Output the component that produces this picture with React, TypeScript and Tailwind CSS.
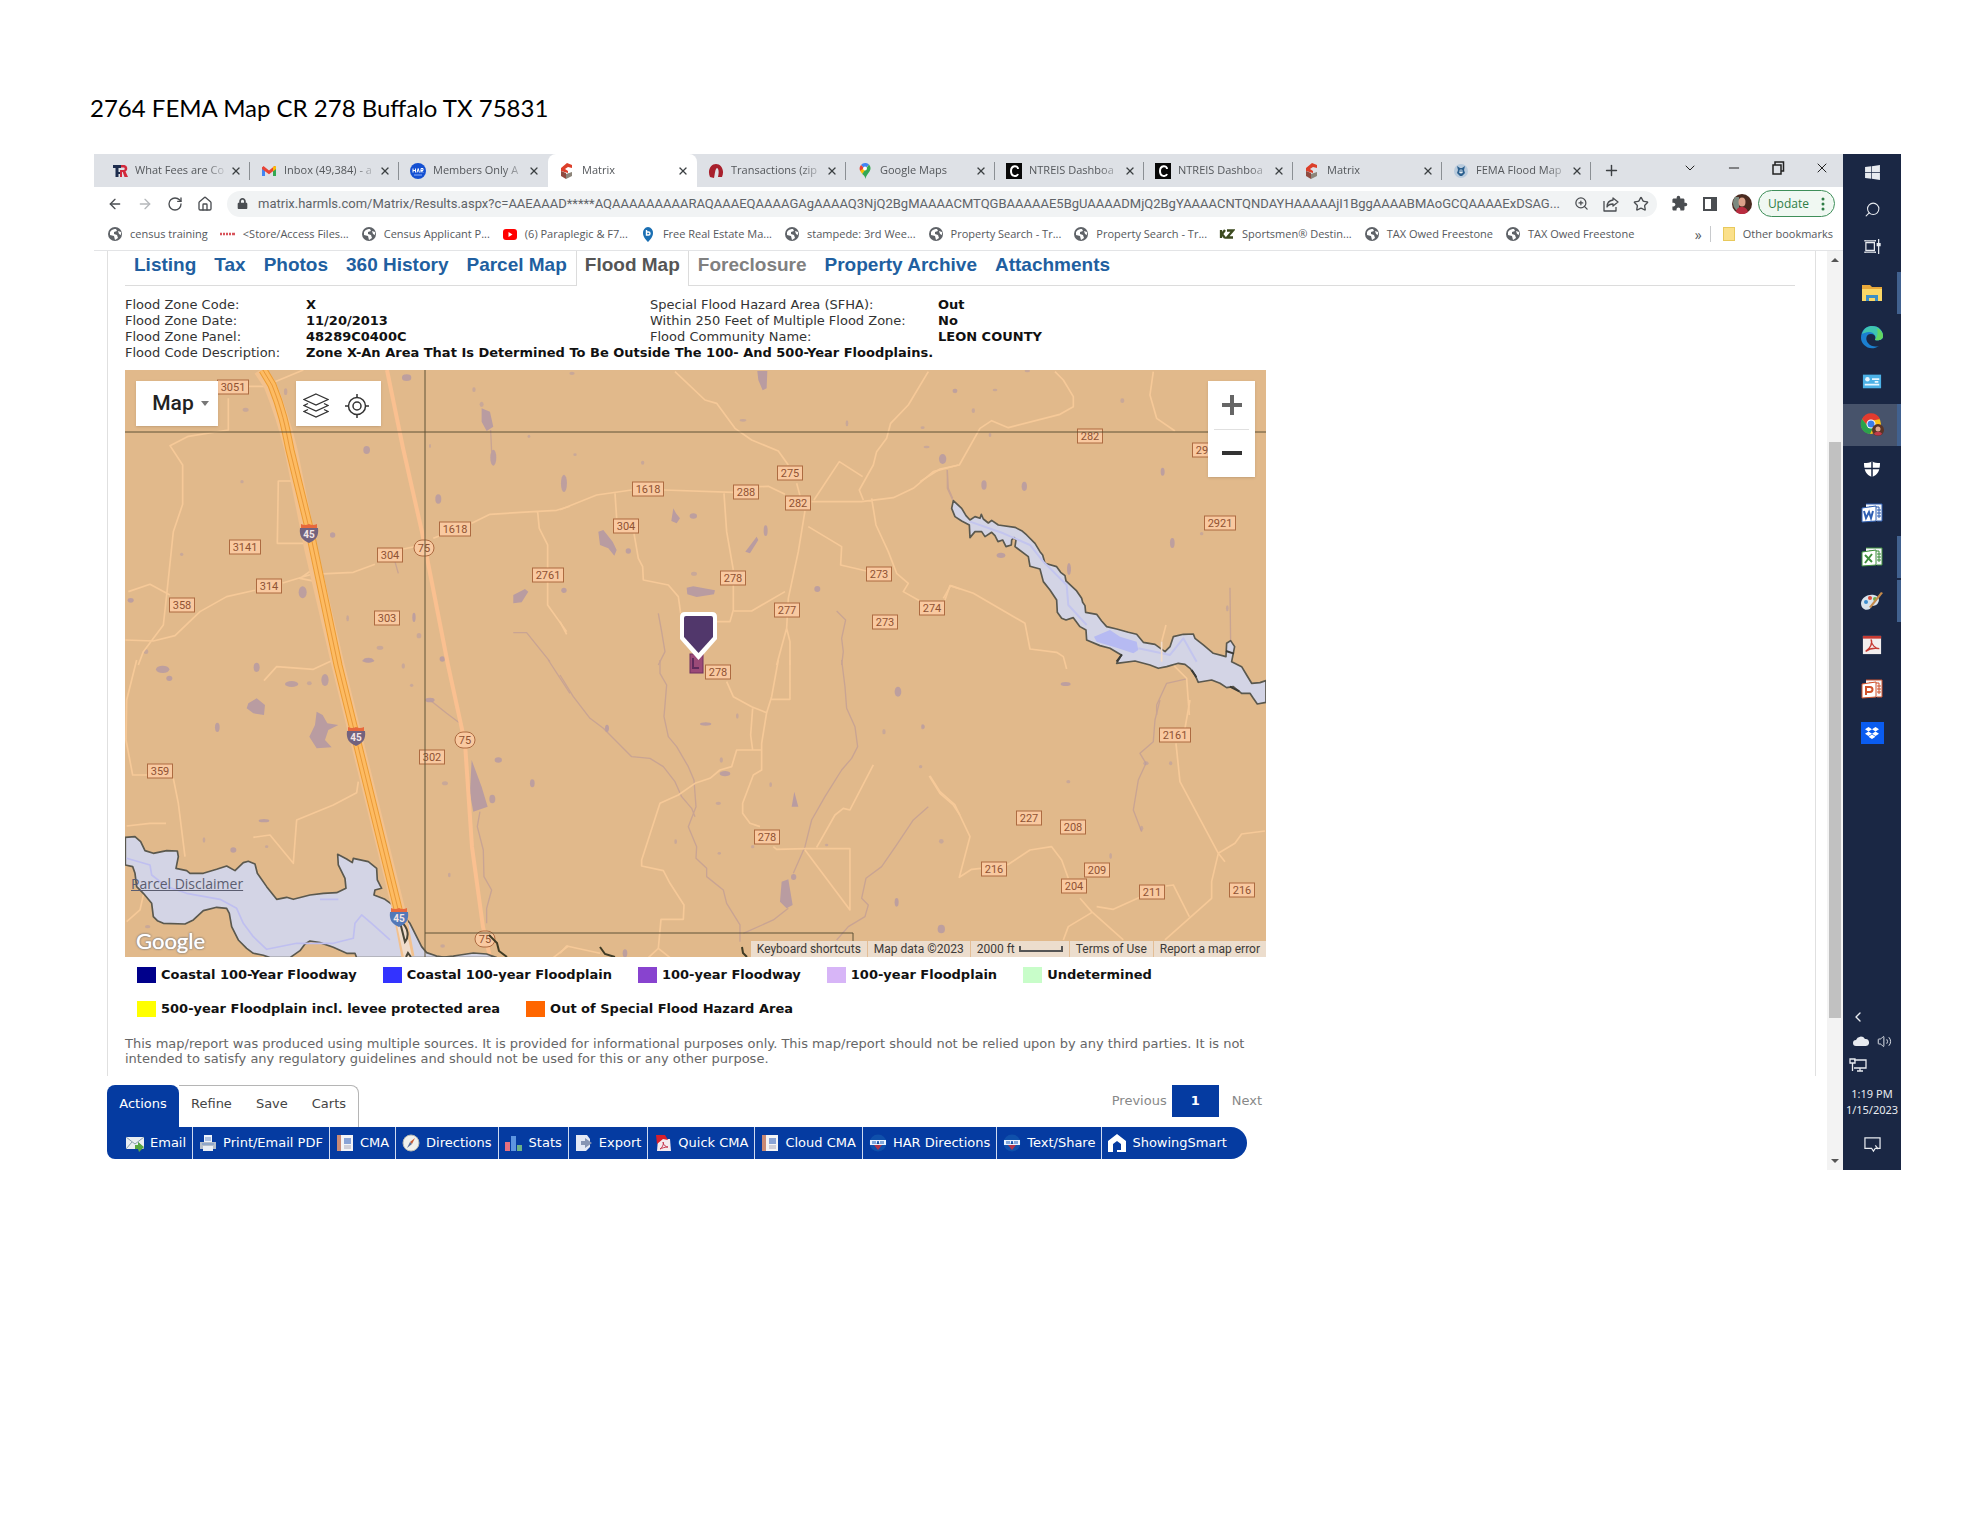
import type { ReactNode } from "react"
import clsx from "clsx"
import {
  ArrowLeft,
  ArrowRight,
  ChevronDown,
  ChevronLeft,
  Home,
  Minus,
  Plus,
  RotateCw,
  Search,
  Star,
  Volume2,
  X,
  ZoomIn,
} from "lucide-react"
import { FaLock, FaWindows, FaDropbox } from "react-icons/fa"
import { MdExtension } from "react-icons/md"

const PAGE_URL =
  "matrix.harmls.com/Matrix/Results.aspx?c=AAEAAAD*****AQAAAAAAAAARAQAAAEQAAAAGAgAAAAQ3NjQ2BgMAAAACMTQGBAAAAAE5BgUAAAADMjQ2BgYAAAACNTQNDAYHAAAAAjI1BggAAAABMAoGCQAAAAExDSAG..."

/* ---------- favicons ---------- */

type FaviconName =
  | "tr"
  | "gmail"
  | "har"
  | "matrix"
  | "zip"
  | "gmaps"
  | "ntreis"
  | "fema"
  | "globe"
  | "canon"
  | "youtube"
  | "estate"
  | "kz"

function Favicon({ name }: { readonly name: FaviconName }) {
  return (
    <svg viewBox="0 0 16 16" className="size-4 shrink-0" aria-hidden="true">
      {name === "tr" && (
        <>
          <path d="M1 2h8v3H6.500v4H8v2H6.500v3H3.500V5H1z" fill="#1d2c4d" />
          <path d="M9 2h3.500a3.500 3.500 0 0 1 1 6.500L16 14h-3.500l-1.800-5H10v5H8V7h3.500a1 1 0 0 0 0-2.500H9z" fill="#d2293c" />
        </>
      )}
      {name === "gmail" && (
        <>
          <path d="M1 4v9h3V6.500z" fill="#4285f4" />
          <path d="M15 4v9h-3V6.500z" fill="#34a853" />
          <path d="M1 4.500 2.500 3 8 7.500 13.500 3 15 4.500V6l-7 5.300L1 6z" fill="#ea4335" />
          <path d="M12 3.800 15 3v3l-3 2.300z" fill="#fbbc04" />
        </>
      )}
      {name === "har" && (
        <>
          <circle cx="8" cy="8" r="8" fill="#1450d2" />
          <path d="M3 5.500v4M5.500 5.500v4M3 7.500h2.500M7 9.500 8.200 5.500l1.200 4M11 9.500v-4h2v2h-2l2 2" stroke="#fff" fill="none" />
          <path d="M4 12h8" stroke="#8db1ff" />
        </>
      )}
      {name === "matrix" && (
        <>
          <path d="m2 5 6-5 5 2v3l-4-1-3 2 3 2v2L2 8z" fill="#dc3f2a" />
          <path d="m2 8 5 2v6l-5-3z" fill="#8f4a3f" />
          <path d="m7 11 6-2v4l-6 3z" fill="#8d857a" />
        </>
      )}
      {name === "zip" && (
        <path d="M2 14C-1 7 3 1 8 1s9 6 6 13h-4c1-4 1-8-1-9C7 6 7 11 6 15z" fill="#a8202c" />
      )}
      {name === "gmaps" && (
        <>
          <path d="M8 0a5.500 5.500 0 0 0-4 2l4 4 4-4.500A5 5 0 0 0 8 0z" fill="#4285f4" />
          <path d="M4 2a5.500 5.500 0 0 0-.8 6L8 6z" fill="#ea4335" />
          <path d="m3.200 8 2 3L10 5 8 4z" fill="#fbbc04" />
          <path d="M12 1.500c2 2 2 5 .5 7C10 12 9 13 8.500 16 8 13 7 12.500 5.200 11z" fill="#34a853" />
          <circle cx="8" cy="5.500" r="1.900" fill="#fff" />
        </>
      )}
      {name === "ntreis" && (
        <>
          <path d="M0 0h16v16H0z" fill="#080808" />
          <path d="M12 6C12 2 5 2 5 8s6 6 7 3" stroke="#fff" strokeWidth="2" fill="none" />
        </>
      )}
      {name === "fema" && (
        <>
          <circle cx="8" cy="8" r="7" fill="#b9cbdd" />
          <path d="m4 3 3 2h2l3-2-1 4 1 3-3 3H7l-3-3 1-3z" fill="#2b5f8e" />
          <circle cx="8" cy="8.500" r="2" fill="#e7eef4" />
          <path d="M6 8h4" stroke="#2b5f8e" />
        </>
      )}
      {name === "globe" && (
        <>
          <circle cx="8" cy="8" r="7" fill="#5f6368" />
          <path d="M3 6c2-3 4-3 6-3l1 2-3 1v2l3 1 1 3-3 2-1-4-4-1z" fill="#fff" />
          <path d="m11 5 3 1v3l-2-1z" fill="#fff" />
        </>
      )}
      {name === "canon" && <path d="M0 8h2m1 0h2m1 0h2m1 0h2m1 0h3" stroke="#d8545b" strokeWidth="2.500" />}
      {name === "youtube" && (
        <>
          <rect x="1" y="3" width="14" height="11" rx="3" fill="#f00" />
          <path d="m6.500 6 4 2.500-4 2.500z" fill="#fff" />
        </>
      )}
      {name === "estate" && (
        <>
          <path d="M8 1a5.500 5.500 0 0 1 5 6c0 4-3 7-5 9-2-2-5-5-5-9a5.500 5.500 0 0 1 5-6z" fill="#1b6fb3" />
          <path d="M6.500 4v5h2a1.500 1.500 0 0 0 0-3h-2" fill="none" stroke="#fff" strokeWidth="1.400" />
        </>
      )}
      {name === "kz" && (
        <path d="M2 4v8M6 4 3 8l3 4M8 4.500h6l-6 7h6" stroke="#3c4a1f" strokeWidth="2.300" fill="none" />
      )}
    </svg>
  )
}

/* ---------- browser frame ---------- */

type BrowserTab = { readonly title: string; readonly icon: FaviconName }

const BROWSER_TABS: readonly BrowserTab[] = [
  { title: "What Fees are Co", icon: "tr" },
  { title: "Inbox (49,384) - a", icon: "gmail" },
  { title: "Members Only A", icon: "har" },
  { title: "Matrix", icon: "matrix" },
  { title: "Transactions (zip", icon: "zip" },
  { title: "Google Maps", icon: "gmaps" },
  { title: "NTREIS Dashboa", icon: "ntreis" },
  { title: "NTREIS Dashboa", icon: "ntreis" },
  { title: "Matrix", icon: "matrix" },
  { title: "FEMA Flood Map", icon: "fema" },
]
const ACTIVE_TAB = 3

function TabStrip() {
  return (
    <div className="flex h-[33px] items-stretch bg-[#dee1e6] pl-[7px]">
      {BROWSER_TABS.map((tab, i) => (
        <div
          key={i}
          className={clsx(
            "flex w-[149px] shrink items-center gap-[7px] pr-2 pl-[11px] text-[#54575b]",
            i === ACTIVE_TAB && "rounded-t-lg bg-white",
          )}
        >
          <Favicon name={tab.icon} />
          <span className="-mr-[6px] flex-1 overflow-hidden text-[11px] whitespace-nowrap [mask-image:linear-gradient(to_right,black_75%,transparent)]">
            {tab.title}
          </span>
          <button aria-label={`Close ${tab.title}`}>
            <X size={12} strokeWidth={2.5} className="text-[#3c4043]" />
          </button>
          <span
            className={clsx(
              "-mr-2 h-[18px] w-px",
              i === ACTIVE_TAB || i === ACTIVE_TAB - 1 ? "bg-transparent" : "bg-[#8b8f94]",
            )}
          />
        </div>
      ))}
      <button aria-label="New tab" className="px-3 text-[#3c4043]">
        <Plus size={17} strokeWidth={2} />
      </button>
      <div className="ml-auto flex items-start gap-7 pt-[6px] pr-[13px] text-[#222]">
        <button aria-label="Search tabs"><ChevronDown size={16} strokeWidth={1.5} /></button>
        <button aria-label="Minimize"><Minus size={16} strokeWidth={1.5} /></button>
        <button aria-label="Restore">
          <svg viewBox="0 0 16 16" className="size-4" fill="none" stroke="currentColor" strokeWidth="1.500">
            <rect x="3" y="5" width="8" height="9" />
            <path d="M5 5V2h8.500v9H11" />
          </svg>
        </button>
        <button aria-label="Close window"><X size={16} strokeWidth={1.5} /></button>
      </div>
    </div>
  )
}

function AddressBar() {
  return (
    <div className="flex h-[33px] items-center pr-2 pl-[13px] text-[#4a4d51]">
      <div className="flex items-center gap-[14px]">
        <button aria-label="Back"><ArrowLeft size={16} /></button>
        <button aria-label="Forward" className="text-[#b5b8bb]"><ArrowRight size={16} /></button>
        <button aria-label="Reload"><RotateCw size={16} /></button>
        <button aria-label="Home"><Home size={16} /></button>
      </div>
      <div className="ml-[14px] flex h-[26px] flex-1 items-center rounded-full bg-[#f1f3f4] pr-2 pl-[10px]">
        <FaLock size={11} className="shrink-0" />
        <input
          aria-label="Address"
          readOnly
          defaultValue={PAGE_URL}
          className="ml-[10px] min-w-0 flex-1 bg-transparent font-[Roboto,sans-serif] text-[13px] text-[#5f6368] outline-none"
        />
        <div className="flex items-center gap-[14px]">
          <button aria-label="Zoom"><ZoomIn size={15} /></button>
          <button aria-label="Share">
            <svg viewBox="0 0 16 16" className="size-4" fill="none" stroke="currentColor" strokeWidth="1.300" strokeLinejoin="round">
              <path d="M1 5v10h12v-4" />
              <path d="M10 2l5 4-5 4V8c-3 0-5 1-6 3 0-4 2-6.500 6-7z" />
            </svg>
          </button>
          <button aria-label="Bookmark this page"><Star size={16} /></button>
        </div>
      </div>
      <div className="ml-[14px] flex items-center gap-[14px]">
        <button aria-label="Extensions"><MdExtension size={17} /></button>
        <button aria-label="Side panel">
          <svg viewBox="0 0 16 16" className="size-4">
            <rect x="2" y="2" width="12" height="12" fill="none" stroke="currentColor" strokeWidth="2" />
            <path d="M9 2h5v12H9z" fill="currentColor" />
          </svg>
        </button>
        <button aria-label="Profile">
          <svg viewBox="0 0 20 20" className="size-5">
            <circle cx="10" cy="10" r="10" fill="#4a2a20" />
            <path d="M3 3h4v13H4a10 10 0 0 1-1-13z" fill="#7c8a80" />
            <ellipse cx="10" cy="8" rx="3.500" ry="4.500" fill="#dba189" />
            <path d="M4 18c1-5 4-5 6-5s5 1 6 5a10 10 0 0 1-12 0z" fill="#b92c40" />
          </svg>
        </button>
      </div>
      <button className="ml-[6px] flex h-[27px] items-center gap-3 rounded-full border border-[#3f8f5a] bg-[#f0f8f2] px-[9px] text-[12px] text-[#2e7d46]">
        Update
        <svg viewBox="0 0 4 16" className="h-4 w-1" fill="#2e7d46">
          <circle cx="2" cy="3" r="1.500" />
          <circle cx="2" cy="8" r="1.500" />
          <circle cx="2" cy="13" r="1.500" />
        </svg>
      </button>
    </div>
  )
}

const BOOKMARKS: readonly BrowserTab[] = [
  { title: "census training", icon: "globe" },
  { title: "<Store/Access Files...", icon: "canon" },
  { title: "Census Applicant P...", icon: "globe" },
  { title: "(6) Paraplegic & F7...", icon: "youtube" },
  { title: "Free Real Estate Ma...", icon: "estate" },
  { title: "stampede: 3rd Wee...", icon: "globe" },
  { title: "Property Search - Tr...", icon: "globe" },
  { title: "Property Search - Tr...", icon: "globe" },
  { title: "Sportsmen® Destin...", icon: "kz" },
  { title: "TAX Owed Freestone", icon: "globe" },
  { title: "TAX Owed Freestone", icon: "globe" },
]

function BookmarkBar() {
  return (
    <div className="flex h-[31px] items-center gap-3 overflow-hidden border-b border-[#e3e4e6] pr-[10px] pb-[2px] pl-[13px] text-[11px] whitespace-nowrap text-[#55585c]">
      {BOOKMARKS.map((mark, i) => (
        <a key={i} href="#" className="flex items-center gap-[7px]">
          <Favicon name={mark.icon} />
          {mark.title}
        </a>
      ))}
      <div className="ml-auto flex items-center gap-2">
        <button aria-label="More bookmarks" className="text-[14px]">»</button>
        <span className="h-4 w-px bg-[#c8cacd]" />
        <a href="#" className="ml-1 flex items-center gap-2">
          <span className="h-[14px] w-3 border border-[#e8c95c] bg-[#fbe08a]" />
          Other bookmarks
        </a>
      </div>
    </div>
  )
}

/* ---------- page header ---------- */

const PAGE_TABS = [
  "Listing",
  "Tax",
  "Photos",
  "360 History",
  "Parcel Map",
  "Flood Map",
  "Foreclosure",
  "Property Archive",
  "Attachments",
] as const

function PageTabs() {
  return (
    <nav className="flex h-[35px] font-['Liberation_Sans',Arial,sans-serif] text-[19px] leading-7 font-bold">
      {PAGE_TABS.map((tab) => (
        <a
          key={tab}
          href="#"
          className={clsx(
            "border-[#dcdcdc] whitespace-nowrap",
            tab === "Flood Map" ? "border-x px-2 text-[#555]" : "border-b px-[9px]",
            tab === "Foreclosure" && "text-[#808080]",
            tab !== "Flood Map" && tab !== "Foreclosure" && "text-[#215fa0]",
          )}
        >
          {tab}
        </a>
      ))}
      <span className="flex-1 border-b border-[#dcdcdc]" />
    </nav>
  )
}

function FloodFacts() {
  return (
    <dl className="grid grid-cols-[181px_344px_288px_1fr] pt-[11px] text-[13px] leading-4 text-[#333] [&>dd]:font-bold [&>dd]:text-[#111]">
      <dt>Flood Zone Code:</dt>
      <dd>X</dd>
      <dt>Special Flood Hazard Area (SFHA):</dt>
      <dd>Out</dd>
      <dt>Flood Zone Date:</dt>
      <dd>11/20/2013</dd>
      <dt>Within 250 Feet of Multiple Flood Zone:</dt>
      <dd>No</dd>
      <dt>Flood Zone Panel:</dt>
      <dd>48289C0400C</dd>
      <dt>Flood Community Name:</dt>
      <dd>LEON COUNTY</dd>
      <dt>Flood Code Description:</dt>
      <dd className="col-span-3">
        Zone X-An Area That Is Determined To Be Outside The 100- And 500-Year Floodplains.
      </dd>
    </dl>
  )
}

/* ---------- map ---------- */

type Tile = {
  readonly x: number
  readonly y: number
  readonly roads: string
  readonly streams: string
  readonly ponds: string
  readonly dots: readonly (readonly [number, number, number, number])[]
}

// Tile geometry is in thirds of a map pixel; x / y place the tile on the map.
const TILES: readonly Tile[] = [
  {
    x: -5,
    y: -5,
    roads:
      "M325 100V195L205 214L150 242L188 300V418L160 500L140 690L130 780L70 860L55 900M385 64H440L465 50L550 15M520 348H475L472 535H550M25 680L90 658L150 690M16 825L100 828L165 812L240 740L320 695L405 676M488 654L575 628L700 622L765 598M850 552L885 545M940 520L960 512M1055 475L1110 448L1240 440L1310 436L1350 424M1253 440L1258 490L1283 540V720L1340 800M575 560L576 615L540 640L590 650",
    streams: "M1180 803H1220L1290 890M1112 195L1115 260M825 590L835 625",
    ponds: "M1085 130L1110 140L1120 185L1100 198L1085 170ZM1180 690L1215 672L1225 680L1205 712L1180 715Z",
    dots: [
      [860, 38, 14, 10], [1120, 278, 9, 24], [1332, 355, 9, 26], [740, 255, 10, 12], [955, 402, 9, 14],
      [638, 510, 8, 8], [548, 682, 12, 18], [882, 757, 5, 14], [377, 134, 9, 6], [497, 80, 5, 10],
      [366, 350, 5, 5], [1332, 676, 8, 8], [1085, 118, 6, 8], [185, 568, 5, 5], [897, 812, 7, 8],
      [780, 848, 10, 6], [745, 885, 14, 7], [78, 860, 7, 7], [967, 882, 8, 8], [1062, 74, 5, 7],
      [32, 706, 9, 7], [683, 760, 4, 9], [1227, 214, 4, 5], [930, 243, 3, 6],
    ],
  },
  {
    x: -5,
    y: 290,
    roads:
      "M50 0L20 120L18 240L38 345H82M160 355L175 430L195 590M20 498L90 490H138M640 0L580 28L470 20L432 62M715 365L710 398L640 435L530 480L520 610L450 525L400 532M70 705L60 750L20 785M1300 893L1345 858",
    streams: "M930 120L980 160L1020 190M1080 455L1072 500L1090 570L1092 650L1115 690L1100 745V790M1285 0L1350 100",
    ponds:
      "M590 155L608 165L622 190L655 195L625 210L615 240L635 262L590 265L568 230L585 195ZM385 130L410 115L435 135L432 165L400 160L380 145ZM1055 300L1085 380L1103 440L1060 455L1050 400Z",
    dots: [
      [128, 28, 20, 11], [148, 55, 9, 8], [410, 22, 9, 14], [292, 202, 7, 14], [515, 72, 20, 9],
      [615, 60, 11, 18], [568, 70, 7, 6], [432, 482, 16, 5], [340, 570, 9, 8], [252, 540, 4, 8],
      [1135, 300, 11, 8], [1237, 370, 7, 12], [975, 370, 9, 6], [1117, 417, 9, 13], [930, 120, 14, 7],
      [988, 645, 4, 7], [875, 76, 5, 5], [850, 18, 5, 8], [968, 858, 7, 5], [440, 560, 5, 4],
      [83, 800, 8, 5], [745, 2, 18, 6],
    ],
  },
  {
    x: 435,
    y: -5,
    roads:
      "M345 20L435 105L470 115L525 190L575 225L655 258L685 300M710 355L720 392M1105 20L1045 120L992 175L980 220L950 260L940 300L898 375L910 405M0 434L110 390L215 375M312 375L520 382M598 365L625 364L675 388M755 410H905L1000 398L1060 370L1120 320L1195 300M762 405L838 290L908 335M165 385L170 460M222 505L235 580L248 605L250 645L325 660L355 695L362 745M492 385L500 500L520 615M520 660V735L510 770H465M522 738H575L675 680M735 438L715 560L685 700L680 790L650 900M680 790L690 830V900M745 485L845 545L842 600L920 618M935 400L948 480L985 560L1010 625L1045 655L1030 680L1080 708M1155 705L1170 662L1200 672M0 770L20 808",
    streams: "M295 745L305 800L315 860L295 900M830 738L857 765L845 820L850 860L845 900M1162 315L1165 370L1178 400",
    ponds:
      "M115 500L130 495L158 530L170 555L163 572L145 550L120 540ZM592 18H622L620 70L608 76L595 45ZM380 668L400 664L465 676L462 688L410 696L382 688ZM556 560L590 515L595 525L570 565ZM340 430L348 445L360 460L350 475L334 468Z",
    dots: [
      [400, 453, 11, 8], [617, 497, 6, 16], [205, 558, 8, 8], [402, 626, 9, 6], [772, 672, 9, 9],
      [1148, 282, 11, 15], [549, 166, 10, 4], [248, 293, 5, 6], [45, 269, 5, 4], [861, 175, 4, 9],
      [1185, 78, 7, 7], [1088, 188, 6, 4], [36, 25, 8, 5], [1100, 246, 9, 4],
    ],
  },
  {
    x: 435,
    y: 290,
    roads:
      "M500 65L520 110L575 140L620 158M655 0L635 110L620 158L605 250V330L580 345L548 430V460L570 490L600 500M640 560L650 568L735 566H870V750L735 570M690 0V118H635M578 145L572 225L578 270M605 270H530L515 320L480 330L450 355L405 370L355 405L300 430L245 600V618L310 632L330 670L372 735L370 778H303L295 865L265 893M295 865L330 893M0 880L20 858L120 880M770 562L825 465L850 445L870 450L940 315M1108 348L1140 400L1180 435L1200 465",
    streams:
      "M0 45L40 110L90 175L130 205L215 290L270 295L310 320L345 365L365 410L395 445L405 470M300 0V40L320 75L312 170L325 230L350 260L385 320L402 360L408 440L385 500L410 560L408 595L440 625L440 650L490 690L500 730L540 795V845M845 0L855 80L860 145L885 200L893 260L875 295L845 330L795 410L755 480L735 560L700 640M685 745L640 780L550 820M1105 440L1060 480L1010 555L965 620L918 655L905 715L925 735L915 770L865 800L830 840",
    ponds: "M665 665L685 658L698 735L680 745L660 725ZM703 395L715 440H695Z",
    dots: [
      [701, 651, 8, 9], [495, 341, 16, 8], [437, 192, 17, 5], [475, 430, 8, 5], [1014, 95, 10, 15],
      [484, 300, 5, 8], [1144, 807, 11, 13], [1010, 727, 6, 13], [972, 215, 5, 8], [1090, 200, 5, 6],
      [632, 374, 4, 7], [141, 205, 6, 11], [478, 580, 5, 4], [347, 545, 4, 7], [1082, 320, 5, 5],
      [800, 555, 5, 4], [532, 168, 4, 8], [195, 880, 7, 12], [578, 560, 5, 5],
    ],
  },
  {
    x: 795,
    y: -5,
    roads:
      "M0 350L60 312L118 300L180 190L215 167L265 188L420 148L460 125V95L430 45L405 20M700 20L690 90L710 160L765 198M70 700L92 662L160 685L315 775L330 852L410 862L430 875L440 912M738 780L725 830M760 900L800 940L808 1050",
    streams: "M930 668L932 830M800 942L740 955L710 1020V1050",
    ponds: "",
    dots: [
      [192, 360, 8, 14], [313, 364, 8, 14], [728, 320, 6, 12], [757, 534, 7, 15], [447, 612, 6, 18],
      [243, 571, 13, 8], [845, 506, 5, 5], [437, 957, 15, 6], [105, 77, 7, 6], [607, 107, 6, 7],
      [160, 137, 5, 7], [322, 18, 8, 4], [225, 75, 7, 4], [210, 210, 4, 6], [922, 730, 4, 9],
    ],
  },
  {
    x: 775,
    y: 330,
    roads:
      "M90 228L120 275L165 315L210 410L178 532L215 508L243 505M322 495L390 450L455 440L485 480L505 535M540 595L575 635L670 720M575 638L505 680L490 720M590 620L640 628L720 592M798 558L820 555L868 650M795 720L935 595V545L955 460L840 245L828 130M855 85L870 0M955 460L1005 430L1025 402L1095 393M955 460L975 485",
    streams: "M780 0L765 60L760 125L720 160L738 190L715 240L700 330L725 395",
    ponds: "",
    dots: [
      [124, 424, 7, 7], [68, 80, 5, 8], [505, 245, 6, 5], [812, 190, 5, 6], [632, 468, 4, 9],
      [725, 385, 5, 8], [738, 190, 8, 6],
    ],
  },
]

const COUNTY_ROADS: readonly (readonly [string, number, number])[] = [
  ["3051", 108, 17], ["3141", 120, 177], ["314", 144, 216], ["358", 57, 235], ["304", 265, 185],
  ["1618", 330, 159], ["303", 262, 248], ["2761", 423, 205], ["359", 35, 401], ["302", 307, 387],
  ["275", 665, 103], ["1618", 523, 119], ["288", 621, 122], ["282", 673, 133], ["304", 501, 156],
  ["278", 608, 208], ["273", 754, 204], ["277", 662, 240], ["274", 807, 238], ["273", 760, 252],
  ["278", 593, 302], ["278", 642, 467], ["282", 965, 66], ["29", 1077, 80], ["2921", 1095, 153],
  ["2161", 1050, 365], ["227", 904, 448], ["208", 948, 457], ["216", 869, 499], ["209", 972, 500],
  ["204", 949, 516], ["211", 1027, 522], ["216", 1117, 520],
]

const HIGHWAY_75: readonly (readonly [number, number])[] = [[299, 178], [340, 370], [360, 569]]
const INTERSTATE_45: readonly (readonly [number, number])[] = [[184, 163], [231, 366], [274, 547]]

const RIVER =
  "M100 407L125 430L138 452L150 465L165 455L180 460L184 448L190 462L205 474L215 466L235 480L285 487L305 497L320 510L345 535L360 560L368 570L375 595L410 605L422 622L435 632L438 648L470 678L485 700L488 712L495 722L497 742L530 748L545 768L560 785L590 792L625 802L650 808L670 832L705 838L735 860L750 845L760 815L790 808L820 807L825 820L850 840L880 865L918 875L920 835L932 827L944 845L935 890L965 905L980 930L995 955L1020 953L1038 947V1012L1012 1017L1000 1000L990 985L965 985L940 965L920 968L900 955L875 945L835 952L825 930L810 910L795 898L775 895L740 905L715 910L690 900L645 888L590 895L604 870L570 850L540 842L500 825L498 795L480 785L460 758L438 765L425 760L412 742L410 705L390 675L370 650L360 612L330 604L325 575L285 545L288 525L282 518L275 525L274 540L258 545L248 525L234 530L225 512L215 502L195 515L185 500L165 500L150 518L148 480L125 468L105 455L95 430Z"

const RESERVOIR =
  "M16 532L45 530L62 545L75 572L100 580L140 572L172 573L175 590L168 625L200 632L210 640L250 640L290 628L320 618L345 632L370 608L385 604L405 612L412 640L440 680L470 718L500 712L520 718L570 705L610 700L650 698L678 685L675 655L655 615L653 583L680 597L697 608L700 595L745 605L770 625L772 660L785 685L765 690L762 705L795 718L825 740L870 790L905 860L920 878L950 888L980 893H710L705 880L680 880L640 862L600 848L570 843L555 852L540 872L510 893H450L430 886L400 880L380 865L355 840L335 800L328 760L320 745L290 742L250 752L220 780L195 792L130 790L112 782L100 770L95 730L70 700L50 680L45 640L38 620L16 615Z"

function MapCanvas() {
  return (
    <svg viewBox="0 0 1141 587" className="block w-full" role="img" aria-label="Flood zone map">
      <path d="M0 0h1141v587H0z" fill="#e1b98b" />
      {TILES.map((tile, i) => (
        <g key={i} transform={`translate(${tile.x} ${tile.y}) scale(.3333)`} strokeLinejoin="round">
          <path d={tile.streams} fill="none" stroke="#c9a493" strokeWidth="4" />
          <g fill="#b99ca1">
            <path d={tile.ponds} />
            {tile.dots.map(([cx, cy, rx, ry], j) => (
              <ellipse key={j} cx={cx} cy={cy} rx={rx} ry={ry} fillOpacity={rx * ry > 60 ? 0.9 : 0.6} />
            ))}
          </g>
          <path d={tile.roads} fill="none" stroke="#f6c998" strokeWidth="5" />
        </g>
      ))}

      <path d="M262 0 278 78 297 162 323 295 340 373 347 477 358 557 365 587" fill="none" stroke="#fac090" strokeWidth="4" />

      <g transform="translate(795 -5) scale(.3333)" strokeLinejoin="round">
        <path d="M82 315V370L98 405" fill="none" stroke="#c9a493" strokeWidth="4" />
        <path d={RIVER} fill="#d3d4e5" stroke="#5a584e" strokeWidth="5" />
        <path d="M522 815L570 795L600 815L650 830L655 855L640 865L590 848L530 830Z" fill="#b6baf2" />
        <path d="M150 470L250 505L330 540L370 590L440 660L445 720L500 780M655 850L750 870L790 820L830 890" fill="none" stroke="#c3c5ee" strokeWidth="6" />
        <path d="M725 830V890" stroke="#f3dcc8" strokeWidth="5" />
        <path d="M918 858l24 8M590 890l16-22M815 915l14 22M930 965l28 14" stroke="#3a3a36" strokeWidth="6" />
      </g>
      <g transform="translate(-5 290) scale(.3333)" strokeLinejoin="round">
        <path d={RESERVOIR} fill="#d3d4e5" stroke="#5a584e" strokeWidth="5" />
        <path d="M960 893L1000 888L1060 879L1100 882L1130 893Z" fill="#d3d4e5" stroke="#5a584e" strokeWidth="5" />
        <path d="M20 595L90 615L95 645L140 680L200 700L300 718L350 745L370 790L400 830L440 868L530 850L640 850L700 835L705 790L725 765L760 795L810 840M600 718H655" fill="none" stroke="#bfbff0" strokeWidth="5" />
      </g>

      <path d="M135 0 145 15C155 40 160 55 166 80L186 180 213 295 232 372 275 545 283 587" fill="none" stroke="#f2c18e" strokeWidth="13" />
      <path d="M138 0 147 15C157 40 160 55 165 80L185 162 213 295 232 372 274 543" fill="none" stroke="#ec9d35" strokeWidth="9" />
      <path d="M138 0 147 15C157 40 160 55 165 80L185 162 213 295 232 372 274 543" fill="none" stroke="#fdbb62" strokeWidth="7" />
      <path d="M138 0 147 15C157 40 160 55 165 80L185 162 213 295 232 372 274 543" fill="none" stroke="#e8983a" strokeWidth="1" />
      <path d="M275 550 283 587" stroke="#f0dccb" strokeWidth="8" />
      <path d="M276 552c8 6 8 15 4 20l-5-20M281 587l2-4 3 4" fill="none" stroke="#4a4638" strokeWidth="2" />

      <g fontFamily="Roboto, sans-serif" textAnchor="middle">
        {COUNTY_ROADS.map(([label, x, y], i) => {
          const width = label.length * 6 + 7
          return (
            <g key={i}>
              <rect x={x - width / 2} y={y - 7} width={width} height="14" fill="#f9c9a0" stroke="#ad6b41" />
              <text x={x} y={y + 4} fontSize="11" fill="#8f5233">{label}</text>
            </g>
          )
        })}
        {HIGHWAY_75.map(([x, y]) => (
          <g key={y}>
            <rect x={x - 10} y={y - 8} width="20" height="16" rx="8" fill="#f9c9a0" stroke="#ad6b41" />
            <text x={x} y={y + 4} fontSize="11" fill="#8f5233">75</text>
          </g>
        ))}
        {INTERSTATE_45.map(([x, y], i) => (
          <g key={y}>
            <path
              d={`M${x - 9} ${y - 5}h18c1 8-2 12-9 15-7-3-10-7-9-15z`}
              fill={i === 2 ? "#5278b8" : "#72627e"}
            />
            <path d={`M${x - 8} ${y - 9}q4 2 8 0q4 2 8 0v4h-16z`} fill="#e8693c" />
            <text x={x} y={y + 5} fontSize="10" fontWeight="700" fill="#f3e6e6">45</text>
          </g>
        ))}
      </g>

      <path d="M0 62H1141M300 0V587M300 563H728V572" fill="none" stroke="#5e5236" strokeWidth="1" />
      <path d="M364 565l8 8 2 8 8 6M475 577l5 7 10 3M617 577l1 6 4 4" fill="none" stroke="#3f3b25" strokeWidth="2" />

      <rect x="565" y="284" width="13" height="19" fill="#9b4a78" stroke="#6f3060" />
      <path d="M568 288v10h6" fill="none" stroke="#5f2a5c" strokeWidth="2" />
      <path
        d="M560 242H587Q592 242 592 247V269L573.500 290 555 269V247Q555 242 560 242Z"
        fill="#fff"
      />
      <path d="M561 246H586Q588 246 588 248V267L573.500 283 559 267V248Q559 246 561 246Z" fill="#51376b" />
    </svg>
  )
}

function MapPanel() {
  return (
    <div className="relative mt-[9px] w-full max-w-[1141px] font-[Roboto,sans-serif]">
      <MapCanvas />
      <button className="absolute top-[11px] left-[11px] flex h-[45px] w-[82px] items-center justify-center gap-[7px] bg-white pl-[7px] text-[21px] font-medium text-[#222] shadow-sm">
        Map
        <svg viewBox="0 0 8 5" className="h-[5px] w-2" fill="#777"><path d="M0 0h8L4 5z" /></svg>
      </button>
      <div className="absolute top-[11px] left-[171px] flex h-[45px] w-[85px] items-center justify-around bg-white pt-1 pr-1 text-[#333] shadow-sm">
        <button aria-label="Layers">
          <svg viewBox="0 0 26 26" className="size-[26px]" fill="none" stroke="currentColor" strokeWidth="1.300">
            <path d="m13 1 12 5.500L13 12 1 6.500zM5 10.500 1 12.500 13 18l12-5.500-4-2M5 16.500l-4 2L13 24l12-5.500-4-2" />
          </svg>
        </button>
        <button aria-label="My location">
          <svg viewBox="0 0 26 26" className="size-[26px]" fill="none" stroke="currentColor" strokeWidth="1.500">
            <circle cx="13" cy="13" r="8.500" />
            <circle cx="13" cy="13" r="4" />
            <path d="M13 1v4M13 21v4M1 13h4M21 13h4" />
          </svg>
        </button>
      </div>
      <div className="absolute top-[11px] right-[11px] flex h-24 w-[47px] flex-col bg-white px-[6px] shadow-sm">
        <button aria-label="Zoom in" className="flex flex-1 items-center justify-center border-b border-[#e0e0e0]">
          <svg viewBox="0 0 20 20" className="size-5"><path d="M10 0v20M0 10h20" stroke="#666" strokeWidth="4" /></svg>
        </button>
        <button aria-label="Zoom out" className="flex flex-1 items-center justify-center">
          <svg viewBox="0 0 20 20" className="size-5"><path d="M0 10h20" stroke="#333" strokeWidth="4" /></svg>
        </button>
      </div>
      <a
        href="#"
        className="absolute bottom-[63px] left-[6px] font-['Open_Sans',sans-serif] text-[14px] leading-5 text-[#5b5d70] underline"
      >
        Parcel Disclaimer
      </a>
      <span className="absolute bottom-[2px] left-[11px] font-[Lato,sans-serif] text-[22px] leading-7 text-white [text-shadow:0_0_1px_#fff,0_0_2px_#555,0_0_2px_#777]">
        Google
      </span>
      <div className="absolute right-0 bottom-0 flex h-4 divide-x divide-[#e3bd95] bg-[#ecddcd] text-[12px] leading-4 text-[#3d3a37]">
        <button className="px-[6px]">Keyboard shortcuts</button>
        <span className="px-[6px]">Map data ©2023</span>
        <button className="flex items-center gap-1 px-[6px]">
          2000 ft
          <span className="h-[6px] w-[44px] border-x-2 border-b-2 border-[#555]" />
        </button>
        <a href="#" className="px-[6px]">Terms of Use</a>
        <a href="#" className="px-[6px]">Report a map error</a>
      </div>
    </div>
  )
}

const LEGEND_ROWS = [
  [
    { label: "Coastal 100-Year Floodway", color: "bg-[#00008b]" },
    { label: "Coastal 100-year Floodplain", color: "bg-[#3333ff]" },
    { label: "100-year Floodway", color: "bg-[#8843cf]" },
    { label: "100-year Floodplain", color: "bg-[#d7b5f7]" },
    { label: "Undetermined", color: "bg-[#c8fdc9]" },
  ],
  [
    { label: "500-year Floodplain incl. levee protected area", color: "bg-[#ffff00]" },
    { label: "Out of Special Flood Hazard Area", color: "bg-[#ff6600]" },
  ],
]

function Legend() {
  return (
    <div className="space-y-4 pt-[9px] pl-3 text-[13px] leading-[18px] font-bold text-[#111]">
      {LEGEND_ROWS.map((row, i) => (
        <ul key={i} className="flex gap-[26px]">
          {row.map(({ label, color }) => (
            <li key={label} className="flex items-center gap-[5px] whitespace-nowrap">
              <span className={clsx("h-4 w-[19px]", color)} />
              {label}
            </li>
          ))}
        </ul>
      ))}
    </div>
  )
}

/* ---------- action bar ---------- */

function NotebookIcon() {
  return (
    <>
      <path d="M3 1h14v16H3z" fill="#f4f4f6" />
      <path d="M1 1h4v16H1z" fill="#c98a75" />
      <path d="M8 4h7v6H8z" fill="#8aa4d6" />
      <path d="M8 12h7M8 14h7" stroke="#aab" />
    </>
  )
}

function HarIcon() {
  return (
    <>
      <circle cx="9" cy="9" r="8.500" fill="#0f50ab" />
      <path d="m5 11 4 5 4-5z" fill="#b1364b" />
      <path d="M1 6h16v5H1z" fill="#e9f3ff" />
      <path d="M4 7v3M6 7v3M8 10l1-3 1 3M12 7v3M14 7v3" stroke="#155ab8" />
    </>
  )
}

const ACTIONS: readonly { readonly label: string; readonly icon: ReactNode }[] = [
  {
    label: "Email",
    icon: (
      <>
        <path d="M0 3h18v12H0z" fill="#e9eef2" />
        <path d="m0 3 9 7 9-7M0 15l6-7M18 15l-6-7" stroke="#8aa0ad" fill="none" />
        <path d="m12 8 6 5-5 5-1-3H9v-4h3z" fill="#58a742" />
      </>
    ),
  },
  {
    label: "Print/Email PDF",
    icon: (
      <>
        <path d="M5 1h8v7H5z" fill="#eef3fb" />
        <path d="M1 8h16v7H1z" fill="#b5bec9" />
        <path d="M4 12h10v5H4z" fill="#e9eef5" />
        <path d="M6 4h6M6 6h6M3 10h12" stroke="#6b8fc9" />
      </>
    ),
  },
  { label: "CMA", icon: <NotebookIcon /> },
  {
    label: "Directions",
    icon: (
      <>
        <circle cx="9" cy="9" r="8" fill="#f1f1ec" stroke="#b9b9b2" />
        <path d="m13 4-3 6-2-2z" fill="#c75c35" />
        <path d="m5 14 3-6 2 2z" fill="#5c6f96" />
      </>
    ),
  },
  {
    label: "Stats",
    icon: (
      <>
        <path d="M0 8h5v9H0z" fill="#e8707f" />
        <path d="M6 2h5v15H6z" fill="#5d95e0" />
        <path d="M12 11h5v6h-5z" fill="#6cb287" />
      </>
    ),
  },
  {
    label: "Export",
    icon: (
      <>
        <path d="M1 1h11l3 4v8l-4 4H1z" fill="#e4e9f5" />
        <path d="m10 4 7 5-7 5v-3H6V7h4z" fill="#8795b3" />
      </>
    ),
  },
  {
    label: "Quick CMA",
    icon: (
      <>
        <path d="M4 5h12l1 12H3z" fill="#f4e9ee" />
        <path d="M2 1h9l3 5-5-1-6 5z" fill="#d61f2c" />
        <path d="M6 15c3-2 4-6 3-7 0 3 3 5 5 5-3 0-6 1-8 2z" fill="none" stroke="#c6324b" />
      </>
    ),
  },
  { label: "Cloud CMA", icon: <NotebookIcon /> },
  { label: "HAR Directions", icon: <HarIcon /> },
  { label: "Text/Share", icon: <HarIcon /> },
  {
    label: "ShowingSmart",
    icon: <path d="M9 0 0 7v11h5v-8l4-3 4 3v6h-4v2h9V7z" fill="#fff" />,
  },
]

function ActionBar() {
  return (
    <div className="max-w-[1163px] pt-[9px] text-[13px]">
      <div className="flex h-[42px] items-stretch">
        <button className="w-[72px] rounded-t-lg bg-[#053ba1] pb-1 text-white">Actions</button>
        <div className="flex gap-6 rounded-tr-lg border-t border-r border-[#b5b5b5] px-3 pb-[5px] text-[#444]">
          <button>Refine</button>
          <button>Save</button>
          <button>Carts</button>
        </div>
        <div className="ml-auto flex h-8 items-center text-[#888]">
          <button>Previous</button>
          <button className="mx-[5px] h-8 w-[47px] bg-[#053ba1] font-bold text-white">1</button>
          <button className="px-2">Next</button>
        </div>
      </div>
      <div className="flex h-8 w-max divide-x divide-[#cfdaf0] overflow-hidden rounded-r-2xl rounded-bl-lg bg-[#053ba1] pl-[13px] text-white">
        {ACTIONS.map(({ label, icon }) => (
          <button key={label} className="flex items-center gap-[6px] px-[6px] whitespace-nowrap last:pr-5">
            <svg viewBox="0 0 18 18" className="size-[18px]" aria-hidden="true">{icon}</svg>
            {label}
          </button>
        ))}
      </div>
    </div>
  )
}

/* ---------- windows taskbar ---------- */

function OfficeIcon({ color, mark }: { readonly color: string; readonly mark: string }) {
  return (
    <svg viewBox="0 0 22 22" className="size-[22px]">
      <path d="M5 2h16v17H5z" fill="#f3f5f8" />
      <path d="M5 2h16v17h-5M8 5h10v11" stroke={color} fill="none" />
      <path d="M16 8h4M16 11h4M16 14h4" stroke={color} />
      <path d="M1 6 15 4v15L1 20z" fill="#fff" stroke={color} />
      <path d={mark} stroke={color} strokeWidth="2" fill="none" />
    </svg>
  )
}

const TASKS: readonly { readonly name: string; readonly open?: boolean; readonly icon: ReactNode }[] = [
  {
    name: "File Explorer",
    open: true,
    icon: (
      <svg viewBox="0 0 22 22" className="size-[22px]">
        <path d="M1 3h8l2 2h10v14H1z" fill="#e9a83a" />
        <path d="M1 7h20v12H1z" fill="#fbd766" />
        <path d="M5 19v-6h12v6h-3v-3H8v3z" fill="#3d8fc6" />
      </svg>
    ),
  },
  {
    name: "Edge",
    icon: (
      <svg viewBox="0 0 24 24" className="size-6">
        <path d="M1 13C1 5 6 1 12 1c7 0 11 5 11 10 0 4-4 5-8 4 2-4-1-6-4-6-5 0-6 5-3 9 3 4 8 4 11 3-9 6-18-1-18-8z" fill="#1b7fd0" />
        <path d="M2 9C4 3 8 1 12 1c7 0 11 5 11 10 0 4-5 5-8 4 2-3-1-8-6-8-3 0-5 1-7 2z" fill="#3fc5b0" />
        <path d="M17 3c4 2 6 5 6 8 0 4-5 5-8 4 3-4 3-8 2-12z" fill="#63d660" />
      </svg>
    ),
  },
  {
    name: "Control Panel",
    icon: (
      <svg viewBox="0 0 22 22" className="size-5">
        <path d="M1 4h20v15H1z" fill="#4cb1e6" />
        <circle cx="6" cy="9" r="2.500" fill="#e8f6ff" />
        <path d="M11 9h8M3 15h16M14 12h4" stroke="#e8f6ff" strokeWidth="2" />
      </svg>
    ),
  },
  {
    name: "Chrome",
    open: true,
    icon: (
      <svg viewBox="0 0 24 24" className="size-6">
        <circle cx="11" cy="11" r="10" fill="#fbc116" />
        <path d="M2 6A10 10 0 0 1 20 6l-9 2-4 4z" fill="#e33b2e" />
        <path d="M2 6a10 10 0 0 0 8 15l3-6-6-3z" fill="#2ba24c" />
        <circle cx="11" cy="11" r="4.500" fill="#fff" />
        <circle cx="11" cy="11" r="3.500" fill="#3a7de8" />
        <circle cx="18" cy="17" r="6" fill="#5a3426" />
        <circle cx="18" cy="16" r="2.500" fill="#e2a98f" />
        <path d="M14 21c1-3 7-3 8 0a6 6 0 0 1-8 0z" fill="#c23a4b" />
      </svg>
    ),
  },
  {
    name: "Security",
    icon: (
      <svg viewBox="0 0 18 18" className="size-[18px]">
        <path d="M9 1c2 2 5 2 8 2 0 7-2 12-8 14C3 15 1 10 1 3c3 0 6 0 8-2z" fill="#fff" />
        <path d="M9 0v18M0 8.500h18" stroke="#1a2744" strokeWidth="1.500" />
      </svg>
    ),
  },
  { name: "Word", icon: <OfficeIcon color="#2f5fb3" mark="m3 9 2 7 3-6 2 6 2-7" /> },
  { name: "Excel", open: true, icon: <OfficeIcon color="#3f8f3c" mark="m4 9 7 7M11 8l-7 9" /> },
  {
    name: "Paint",
    open: true,
    icon: (
      <svg viewBox="0 0 24 24" className="size-6">
        <path d="M1 14C2 8 8 5 14 6c5 1 6 5 4 8-2 4-7 2-7 4s-4 4-7 2c-2-1-3-3-3-6z" fill="#d9e3ec" />
        <circle cx="6" cy="13" r="2" fill="#3d8fd1" />
        <circle cx="10" cy="9" r="2" fill="#d64b3c" />
        <circle cx="15" cy="10" r="2" fill="#6ab04c" />
        <path d="M9 18 21 3l2 1L11 19z" fill="#c58a4a" />
      </svg>
    ),
  },
  {
    name: "Acrobat",
    icon: (
      <svg viewBox="0 0 22 22" className="size-5">
        <path d="M1 1h20v20H1z" fill="#f2eeee" />
        <path d="M1 1h20v3H1z" fill="#c63a33" />
        <path d="M4 18c5-3 8-9 6-13 0 6 5 10 9 10-6-1-11 0-15 3z" fill="none" stroke="#c63a33" strokeWidth="1.500" />
      </svg>
    ),
  },
  { name: "PowerPoint", icon: <OfficeIcon color="#d1532c" mark="M5 17V9h4a2 2 0 0 1 0 5H5" /> },
  {
    name: "Dropbox",
    icon: (
      <span className="flex h-[22px] w-[23px] items-center justify-center bg-[#0a5cf0]">
        <FaDropbox size={14} className="text-white" />
      </span>
    ),
  },
]

function Taskbar() {
  return (
    <aside className="flex w-[58px] shrink-0 flex-col items-center bg-[#1a2744] text-[#e8ebf0]">
      <button aria-label="Start" className="flex h-[37px] items-center"><FaWindows size={17} /></button>
      <button aria-label="Search" className="flex h-[37px] items-center">
        <Search size={17} strokeWidth={1.5} className="-scale-x-100" />
      </button>
      <button aria-label="Task view" className="flex h-[37px] items-center">
        <svg viewBox="0 0 18 18" className="size-[17px]" fill="none" stroke="currentColor" strokeWidth="1.300">
          <path d="M2 5h9v8H2zM1 2v1h11V2M1 16v-1h11v1M15.500 1v16" />
          <path d="M14 6h3v2h-3z" fill="currentColor" />
        </svg>
      </button>
      <div className="flex w-full flex-col gap-[2px] pt-[7px]">
        {TASKS.map(({ name, open, icon }) => (
          <button
            key={name}
            aria-label={name}
            className={clsx(
              "flex h-[42px] w-full items-center justify-center border-x-4 border-l-transparent",
              name === "Chrome" && "bg-[#47536b]",
              open ? "border-r-[#41618f]" : "border-r-transparent",
            )}
          >
            {icon}
          </button>
        ))}
      </div>
      <div className="mt-auto flex w-full flex-col items-center text-center text-[11px] leading-4">
        <button aria-label="Show hidden icons" className="mr-7 flex h-6 items-center"><ChevronLeft size={16} /></button>
        <div className="mb-1 flex h-6 items-center gap-2">
          <svg viewBox="0 0 16 10" className="h-[10px] w-4" fill="#e8ebf0">
            <path d="M3 10a3 3 0 0 1 0-6 5 5 0 0 1 9-1 3.500 3.500 0 0 1 1 7z" />
          </svg>
          <Volume2 size={15} strokeWidth={1.5} />
        </div>
        <svg viewBox="0 0 18 16" className="mr-7 h-4 w-[18px]" fill="none" stroke="currentColor" strokeWidth="1.300">
          <path d="M5 3h12v8H5M8 14h6M11 11v3M1 2h5v4H1zM3.500 6v8" />
        </svg>
        <span className="mt-[13px]">1:19 PM</span>
        <span>1/15/2023</span>
        <button aria-label="Notifications" className="flex h-[52px] items-center">
          <svg viewBox="0 0 18 18" className="size-[17px]" fill="none" stroke="currentColor" strokeWidth="1.300">
            <path d="M1 2h16v11h-5l-2 3-2-3H1z" />
            <path d="M12 10l3 4" />
          </svg>
        </button>
      </div>
    </aside>
  )
}

function Scrollbar() {
  return (
    <div className="flex w-4 shrink-0 flex-col items-center bg-[#f3f3f3] py-[7px]">
      <svg viewBox="0 0 8 4" className="h-1 w-2" fill="#555"><path d="M4 0l4 4H0z" /></svg>
      <div className="flex w-full flex-1 flex-col px-[2px]">
        <span className="flex-[180]" />
        <span className="flex-[574] bg-[#c1c1c1]" />
        <span className="flex-[141]" />
      </div>
      <svg viewBox="0 0 8 4" className="h-1 w-2" fill="#555"><path d="M0 0h8L4 4z" /></svg>
    </div>
  )
}

export default function App() {
  return (
    <main className="min-h-screen bg-white pt-[90px] pr-[87px] pl-[94px]">
      <h1 className="-ml-1 h-16 font-[Lato,sans-serif] text-[24px] leading-9 text-black">
        2764 FEMA Map CR 278 Buffalo TX 75831
      </h1>
      <div className="flex">
        <div className="flex min-w-0 flex-1 flex-col font-['Open_Sans',sans-serif]">
          <TabStrip />
          <AddressBar />
          <BookmarkBar />
          <div className="flex flex-1 font-['DejaVu_Sans',Verdana,sans-serif]">
            <div className="min-w-0 flex-1 pr-[11px] pb-[11px] pl-[13px]">
              <div className="border-x border-[#e0e0e0] pr-5 pb-[10px] pl-[17px]">
                <PageTabs />
                <FloodFacts />
                <MapPanel />
                <Legend />
                <p className="mt-[18px] max-w-[1141px] text-[13px] leading-[15px] text-[#666]">
                  This map/report was produced using multiple sources. It is provided for informational purposes only. This map/report should not be relied upon by any third parties. It is not intended to satisfy any regulatory guidelines and should not be used for this or any other purpose.
                </p>
              </div>
              <ActionBar />
            </div>
            <Scrollbar />
          </div>
        </div>
        <Taskbar />
      </div>
    </main>
  )
}
